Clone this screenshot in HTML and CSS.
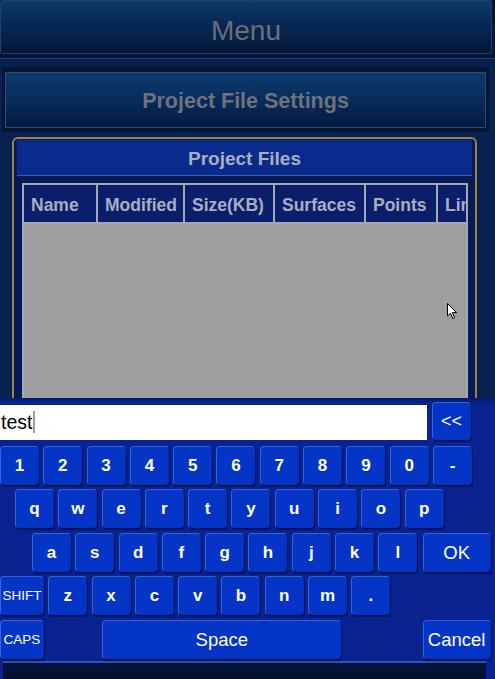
FILE: index.html
```html
<!DOCTYPE html>
<html>
<head>
  <meta charset="utf-8">
  <title>Project Files</title>
  <link rel="stylesheet" href="styles.css">
</head>

<body>
  <div class="screen">
    <header class="menu-bar">Menu</header>

    <main class="content">
      <div class="settings-frame">
        <div class="settings-btn">Project File Settings</div>
      </div>

      <section class="files-panel">
        <div class="files-title">Project Files</div>
        <div class="table-wrap">
          <table class="files">
            <thead>
              <tr>
                <th class="c-name">Name</th>
                <th class="c-mod">Modified</th>
                <th class="c-size">Size(KB)</th>
                <th class="c-surf">Surfaces</th>
                <th class="c-pts">Points</th>
                <th class="c-lines">Lines</th>
              </tr>
            </thead>
          </table>
          <div class="table-body"></div>
        </div>
      </section>

      <svg class="pointer" width="11" height="17" viewBox="0 0 11 17">
        <path d="M0.5 0.5 L0.5 13 L3.5 10.2 L5.8 15.5 L7.6 14.7 L5.4 9.6 L9.5 9.6 Z" fill="#fff" stroke="#000" stroke-width="1"/>
      </svg>
    </main>

    <div class="keyboard">
      <div class="kb-edge"></div>

      <div class="kb-input-row">
        <div class="kb-input">test<span class="caret"></span></div>
        <div class="key key-back">&lt;&lt;</div>
      </div>

      <div class="kb-row row-num">
        <div class="key">1</div>
        <div class="key">2</div>
        <div class="key">3</div>
        <div class="key">4</div>
        <div class="key">5</div>
        <div class="key">6</div>
        <div class="key">7</div>
        <div class="key">8</div>
        <div class="key">9</div>
        <div class="key">0</div>
        <div class="key">-</div>
      </div>

      <div class="kb-row row-q">
        <div class="key">q</div>
        <div class="key">w</div>
        <div class="key">e</div>
        <div class="key">r</div>
        <div class="key">t</div>
        <div class="key">y</div>
        <div class="key">u</div>
        <div class="key">i</div>
        <div class="key">o</div>
        <div class="key">p</div>
      </div>

      <div class="kb-row row-a">
        <div class="key">a</div>
        <div class="key">s</div>
        <div class="key">d</div>
        <div class="key">f</div>
        <div class="key">g</div>
        <div class="key">h</div>
        <div class="key">j</div>
        <div class="key">k</div>
        <div class="key">l</div>
        <div class="key key-wide key-text">OK</div>
      </div>

      <div class="kb-row row-z">
        <div class="key key-small">SHIFT</div>
        <div class="key">z</div>
        <div class="key">x</div>
        <div class="key">c</div>
        <div class="key">v</div>
        <div class="key">b</div>
        <div class="key">n</div>
        <div class="key">m</div>
        <div class="key">.</div>
      </div>

      <div class="kb-row row-space">
        <div class="key key-small">CAPS</div>
        <div class="key key-space key-text">Space</div>
        <div class="key key-wide key-cancel key-text">Cancel</div>
      </div>

      <div class="kb-bottom"></div>
    </div>
  </div>
</body>
</html>
```

FILE: styles.css
```css
* {
    box-sizing: border-box;
    font-family: "Liberation Sans", Arial, sans-serif;
}

body {
    margin: 0;
    background-color: #041634;
}

.screen {
    position: relative;
    width: 495px;
    height: 679px;
    overflow: hidden;
    background-color: #041634;
}

/* top bar */

.menu-bar {
    height: 54px;
    margin-right: 3px;
    border: 1px solid #1c416e;
    border-radius: 2px;
    background: linear-gradient(#0f3a6b, #082a58 40%, #031736);
    color: #6b6f78;
    font-size: 28px;
    line-height: 60px;
    text-align: center;
}

/* main area */

.content {
    position: relative;
    height: 625px;
    margin-top: 4px;
    border-top: 1px solid #1f4576;
    background-color: #072150;
}

.settings-frame {
    margin: 8px 6px 0 2px;
    padding: 5px 3px 4px 3px;
    background-color: #041633;
}

.settings-btn {
    height: 56px;
    border: 1px solid #2a4c7b;
    background: linear-gradient(#0d3a6d, #072c5a 50%, #041a40);
    color: #6e727b;
    font-size: 21.5px;
    font-weight: bold;
    line-height: 56px;
    text-align: center;
}

.files-panel {
    height: 300px;
    margin: 5px 18px 0 12px;
    border: 2px solid #9a843e;
    border-radius: 6px;
    background-color: #061a58;
    padding: 1px 3px;
}

.files-title {
    height: 36px;
    border-bottom: 1px solid #3d5fb4;
    background-color: #0a2a8c;
    color: #a9aec0;
    font-size: 19px;
    font-weight: bold;
    line-height: 37px;
    text-align: center;
}

.table-wrap {
    margin: 7px 4px 0 5px;
    border: 2px solid #a5a7b3;
    border-bottom: none;
    overflow: hidden;
}

.files {
    border-collapse: collapse;
    table-layout: fixed;
    width: 520px;
}

.files th {
    height: 38px;
    padding: 3px 0 0 7px;
    border-right: 2px solid #a5a7b3;
    border-bottom: 2px solid #a5a7b3;
    background-color: #0a1e6c;
    color: #a9aebf;
    font-size: 17.5px;
    font-weight: bold;
    text-align: left;
    white-space: nowrap;
    overflow: hidden;
}

.c-name { width: 73px; }
.c-mod { width: 87px; }
.c-size { width: 90px; }
.c-surf { width: 91px; }
.c-pts { width: 72px; }
.c-lines { width: 107px; }

.table-body {
    height: 200px;
    background-color: #9e9e9e;
}

.pointer {
    position: absolute;
    left: 447px;
    top: 244px;
}

/* on-screen keyboard */

.keyboard {
    position: absolute;
    left: 0;
    top: 398px;
    width: 495px;
    height: 281px;
    background-color: #0a2390;
}

.kb-edge {
    height: 6px;
    background: linear-gradient(#051a6a, #0a2390);
}

.kb-input-row {
    display: flex;
    align-items: center;
    gap: 5px;
    height: 36px;
}

.kb-input {
    display: flex;
    align-items: center;
    width: 427px;
    height: 35px;
    padding-left: 1px;
    background-color: #fff;
    color: #000;
    font-size: 19.5px;
}

.caret {
    display: inline-block;
    width: 2px;
    height: 22px;
    margin-left: 1px;
    background-color: #9c9c9c;
}

.kb-row {
    display: flex;
    gap: 4.3px;
    height: 39px;
}

.row-num {
    margin-top: 6px;
}

.row-q {
    margin-top: 4px;
    padding-left: 15px;
}

.row-a {
    margin-top: 5px;
    padding-left: 32px;
}

.row-z {
    margin-top: 4px;
}

.row-space {
    margin-top: 5px;
}

.key {
    display: flex;
    align-items: center;
    justify-content: center;
    flex: none;
    width: 39px;
    height: 39px;
    border: 1px solid #3563dc;
    border-bottom-color: #0530b0;
    border-right-color: #0530b0;
    border-radius: 4px;
    background-color: #0535c6;
    box-shadow: 1px 2px 1px #03145a;
    color: #fff;
    font-size: 17px;
    font-weight: bold;
}

.key-back {
    height: 38px;
    margin-top: -2px;
    font-weight: normal;
    font-size: 18px;
}

.key-text {
    font-weight: normal;
    font-size: 18.5px;
}

.key-small {
    width: 44px;
    font-size: 13.5px;
    font-weight: normal;
}

.key-wide {
    width: 68px;
    margin-left: 1px;
}

.key-space {
    width: 239px;
    margin-left: 54px;
}

.key-cancel {
    margin-left: 77px;
}

.kb-bottom {
    height: 19px;
    margin: 2px 9px 0 3px;
    border-top: 2px solid #3552b0;
    border-radius: 0 0 4px 0;
    background: linear-gradient(#04133e, #03102e);
}
```
